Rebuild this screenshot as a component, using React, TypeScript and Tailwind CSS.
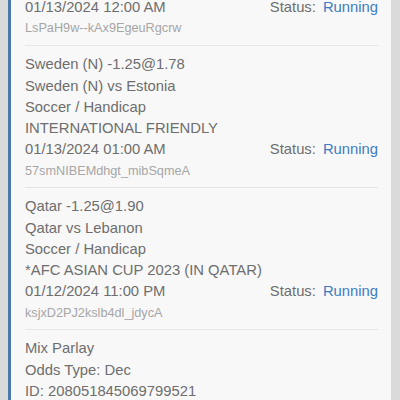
import React from "react";

type Bet = {
  lines: string[];
  date: string;
  id: string;
};

const bets: Bet[] = [
  {
    lines: [
      "Sweden (N) -1.25@1.78",
      "Sweden (N) vs Estonia",
      "Soccer / Handicap",
      "INTERNATIONAL FRIENDLY",
    ],
    date: "01/13/2024 01:00 AM",
    id: "57smNIBEMdhgt_mibSqmeA",
  },
  {
    lines: [
      "Qatar -1.25@1.90",
      "Qatar vs Lebanon",
      "Soccer / Handicap",
      "*AFC ASIAN CUP 2023 (IN QATAR)",
    ],
    date: "01/12/2024 11:00 PM",
    id: "ksjxD2PJ2kslb4dl_jdycA",
  },
];

function StatusRow({ date }: { date: string }) {
  return (
    <div className="flex items-center justify-between h-[21.3px]">
      <span>{date}</span>
      <span>
        Status:<span className="ml-[7px] text-[#3d7cc4]">Running</span>
      </span>
    </div>
  );
}

export default function App() {
  return (
    <div
      className="w-[400px] h-[400px] overflow-hidden bg-[#dadada] flex text-[#6e6e6e] text-[14.8px] leading-[21.3px]"
      style={{ fontFamily: '"Liberation Sans", Arial, sans-serif' }}
    >
      <div className="ml-[8px] w-[383px] bg-[#f8f8f8] border-l-[3px] border-[#4a78a8] pl-[14px] pr-[13px] flex flex-col">
        <div className="-mt-[3px] pb-[7px] border-b border-[#e6e6e6]">
          <StatusRow date="01/13/2024 12:00 AM" />
          <div className="text-[12.7px] leading-[20px] text-[#a6a6a6]">
            LsPaH9w--kAx9EgeuRgcrw
          </div>
        </div>
        {bets.map((b) => (
          <div
            key={b.id}
            className="pt-[8px] pb-[6.5px] border-b border-[#e6e6e6]"
          >
            {b.lines.map((l) => (
              <div key={l} className="h-[21.3px]">
                {l}
              </div>
            ))}
            <StatusRow date={b.date} />
            <div className="text-[12.7px] leading-[20px] text-[#a6a6a6]">
              {b.id}
            </div>
          </div>
        ))}
        <div className="pt-[8px]">
          <div className="h-[21.3px]">Mix Parlay</div>
          <div className="h-[21.3px]">Odds Type: Dec</div>
          <div className="h-[21.3px]">ID: 208051845069799521</div>
        </div>
      </div>
    </div>
  );
}
